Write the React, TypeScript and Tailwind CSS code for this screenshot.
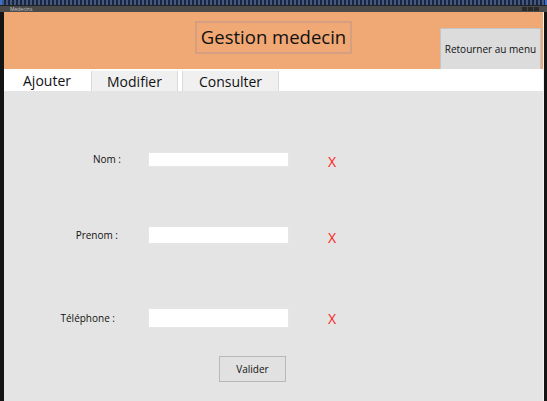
import React from "react";

const font = { fontFamily: '"Open Sans", "Noto Sans", sans-serif' };

function Row({
  label,
  labelPr,
  mt,
  h,
  xShift,
}: {
  label: string;
  labelPr: string;
  mt: string;
  h: string;
  xShift: string;
}) {
  return (
    <div className={`flex items-center ${mt} ${h}`}>
      <div className={`w-[117px] text-right text-[10px] text-[#111] ${labelPr}`}>{label}</div>
      <div className="ml-[27px] h-full w-[141px] border border-[#e6e6e6] bg-white" />
      <div className={`ml-[39px] text-[14px] leading-none text-[#ff1a1a] ${xShift}`}>X</div>
    </div>
  );
}

export default function App() {
  return (
    <div className="flex h-[401px] w-[547px] flex-col overflow-hidden bg-[#141414]" style={font}>
      <div className="h-[5px] w-full border-l-2 border-r-2 border-[#3b6fd0] bg-[repeating-linear-gradient(90deg,#44597f_0px,#44597f_2px,#1a2640_2px,#1a2640_4px)]" />
      <div className="h-[1px] w-full bg-[#222]" />
      <div className="flex h-[6px] items-center justify-between bg-[#4a4a4a] pl-[10px] pr-[8px]">
        <span className="text-[5px] leading-none text-[#c8c8c8]">Medecins</span>
        <div className="flex gap-[1px]">
          <div className="h-[4px] w-[5px] bg-[#2a2a2a]" />
          <div className="h-[4px] w-[5px] bg-[#2a2a2a]" />
          <div className="h-[4px] w-[5px] bg-[#2a2a2a]" />
        </div>
      </div>
      <div className="flex flex-1 pl-[4px] pr-[3px]">
        <div className="flex flex-1 flex-col border-r border-[#f2f2f2]">
          <div className="grid h-[57px] grid-cols-[1fr_auto_1fr] bg-[#f0a875]">
            <div />
            <div className="mt-[9px] flex h-[33px] w-[157px] items-center justify-center self-start border-2 border-[#d69f82] text-[18.5px] leading-none text-[#111]">
              Gestion medecin
            </div>
            <div className="flex items-end justify-end">
              <button className="mb-[-1px] mr-[2px] h-[42px] w-[101px] whitespace-nowrap border border-[#c4c4c4] bg-[#dcdcdc] px-0 text-[10px] text-[#111]">
                Retourner au menu
              </button>
            </div>
          </div>
          <div className="flex h-[22px] items-end bg-white">
            <div className="ml-[1px] flex h-[21px] w-[84px] items-center justify-center bg-white text-[14px] text-[#111]">
              Ajouter
            </div>
            <div className="ml-[2px] flex h-[20px] w-[87px] items-center justify-center border-l border-r border-[#dadada] bg-[#f0f0f0] text-[14px] text-[#111]">
              Modifier
            </div>
            <div className="ml-[4px] flex h-[20px] w-[97px] items-center justify-center border-l border-r border-[#dadada] bg-[#f0f0f0] text-[14px] text-[#111]">
              Consulter
            </div>
          </div>
          <div className="flex flex-1 flex-col bg-[#e4e4e4]">
            <Row label="Nom :" labelPr="pr-0" mt="mt-[61px]" h="h-[15px]" xShift="translate-y-[2px]" />
            <Row label="Prenom :" labelPr="pr-[3px]" mt="mt-[59px]" h="h-[18px]" xShift="translate-y-[3px]" />
            <Row label="Téléphone :" labelPr="pr-[6px]" mt="mt-[64px]" h="h-[20px]" xShift="translate-y-[1px]" />
            <button className="ml-[215px] mt-[28px] h-[26px] w-[67px] border border-[#b8b8b8] bg-[#e1e1e1] text-[10px] text-[#111]">
              Valider
            </button>
          </div>
        </div>
      </div>
    </div>
  );
}
